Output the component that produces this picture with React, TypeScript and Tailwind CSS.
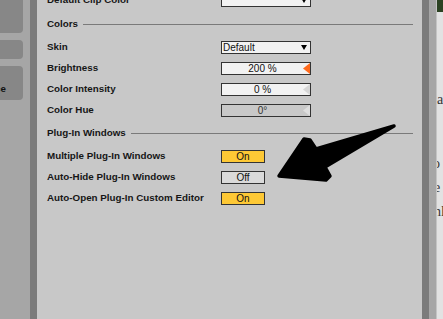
import React from "react";

const font = { fontFamily: '"Liberation Sans", Arial, sans-serif' };

function Row({ label, children }: { label: string; children: React.ReactNode }) {
  return (
    <div className="flex h-[21px] items-center">
      <div className="w-[174px] text-[9.8px] font-bold text-[#161616]">{label}</div>
      {children}
    </div>
  );
}

function Header({ label, cls }: { label: string; cls: string }) {
  return (
    <div className={`flex items-center pr-[9px] ${cls}`}>
      <span className="text-[9.8px] font-bold text-[#161616]">{label}</span>
      <div className="ml-[5px] h-px flex-1 bg-[#7a7a7a]" />
    </div>
  );
}

function Dropdown({ value }: { value: string }) {
  return (
    <div className="flex h-[13px] w-[90px] items-center border border-[#333] bg-[#f2f2f2] pl-[1px] pr-[3px]">
      <span className="flex-1 text-[10px] leading-[11px] text-[#111]">{value}</span>
      <svg width="6" height="5" viewBox="0 0 6 5">
        <polygon points="0,0 6,0 3,5" fill="#000" />
      </svg>
    </div>
  );
}

function Field({ value, tri, bg, color }: { value: string; tri: string; bg: string; color: string }) {
  return (
    <div className={`flex h-[13px] w-[90px] items-center border border-[#333] ${bg}`}>
      <span className={`flex-1 text-center text-[10px] leading-[11px] ${color}`}>{value}</span>
      <svg width="7" height="11" viewBox="0 0 7 11" className="block">
        <polygon points="7,0 7,11 0,5.5" fill={tri} />
      </svg>
    </div>
  );
}

function Toggle({ on }: { on: boolean }) {
  return (
    <div
      className={`h-[13px] w-[44px] border border-[#333] text-center text-[10px] leading-[11px] text-[#111] ${
        on ? "bg-[#fdc835]" : "bg-[#dadada]"
      }`}
    >
      {on ? "On" : "Off"}
    </div>
  );
}

export default function App() {
  return (
    <div className="relative flex h-[319px] w-[443px] overflow-hidden bg-[#c8c8c8]" style={font}>
      {/* left sidebar */}
      <div className="flex w-[30px] flex-col overflow-hidden bg-[#a6a6a6]">
        <div className="mt-[-8px] h-[41px] w-[23px] rounded-r-[4px] bg-[#878787]" />
        <div className="mt-[7px] h-[19px] w-[23px] rounded-r-[4px] bg-[#878787]" />
        <div className="mt-[7px] flex h-[34px] w-[23px] items-end rounded-r-[4px] bg-[#878787] pb-[6px]">
          <span className="ml-[-5px] text-[9.8px] font-bold leading-[10px] text-[#111]">ce</span>
        </div>
      </div>
      <div className="w-[7px] bg-[#7b7b7b]" />

      {/* main panel */}
      <div className="flex w-[385px] flex-col bg-[#c8c8c8] pl-[10px]">
        <div className="mt-[-10px]">
          <Row label="Default Clip Color">
            <Dropdown value="" />
          </Row>
        </div>
        <Header label="Colors" cls="h-[26px] pt-[1px] pb-[1px]" />
        <Row label="Skin">
          <Dropdown value="Default" />
        </Row>
        <Row label="Brightness">
          <Field value="200 %" tri="#ff6a1c" bg="bg-[#f2f2f2]" color="text-[#111]" />
        </Row>
        <Row label="Color Intensity">
          <Field value="0 %" tri="#d6d6d6" bg="bg-[#f2f2f2]" color="text-[#111]" />
        </Row>
        <Row label="Color Hue">
          <Field value="0°" tri="#dedede" bg="bg-[#c8c8c8]" color="text-[#333]" />
        </Row>
        <Header label="Plug-In Windows" cls="h-[25px] pt-[1px] pb-[2px]" />
        <Row label="Multiple Plug-In Windows">
          <Toggle on />
        </Row>
        <Row label="Auto-Hide Plug-In Windows">
          <Toggle on={false} />
        </Row>
        <Row label="Auto-Open Plug-In Custom Editor">
          <Toggle on />
        </Row>
      </div>

      <div className="w-[7px] bg-[#7b7b7b]" />
      <div className="w-[7px] bg-[#a6a6a6]" />

      {/* page behind */}
      <div
        className="flex w-[7px] flex-col overflow-hidden border-l border-[#c4c4c4] bg-[#e2e2e2] text-[14px] text-[#333]"
        style={{ fontFamily: '"Liberation Serif", "Times New Roman", serif' }}
      >
        <div className="h-[12px] w-full bg-[#2b4222]" />
        <div className="mt-[80px] h-[16px] leading-[16px]">a</div>
        <div className="mt-[48px] ml-[-4px] h-[16px] leading-[16px]">o</div>
        <div className="mt-[8px] ml-[-3px] h-[16px] leading-[16px]">e</div>
        <div className="mt-[8px] ml-[-3px] h-[16px] leading-[16px]">nl</div>
      </div>

      {/* annotation arrow */}
      <svg className="pointer-events-none absolute left-0 top-0" width="443" height="319" viewBox="0 0 443 319">
        <polygon
          points="279,176 304,139 310,140 316,149 394,126 325,167 330,176 326,180"
          fill="#000"
          stroke="#000"
          strokeWidth="3.5"
          strokeLinejoin="round"
        />
      </svg>
    </div>
  );
}
